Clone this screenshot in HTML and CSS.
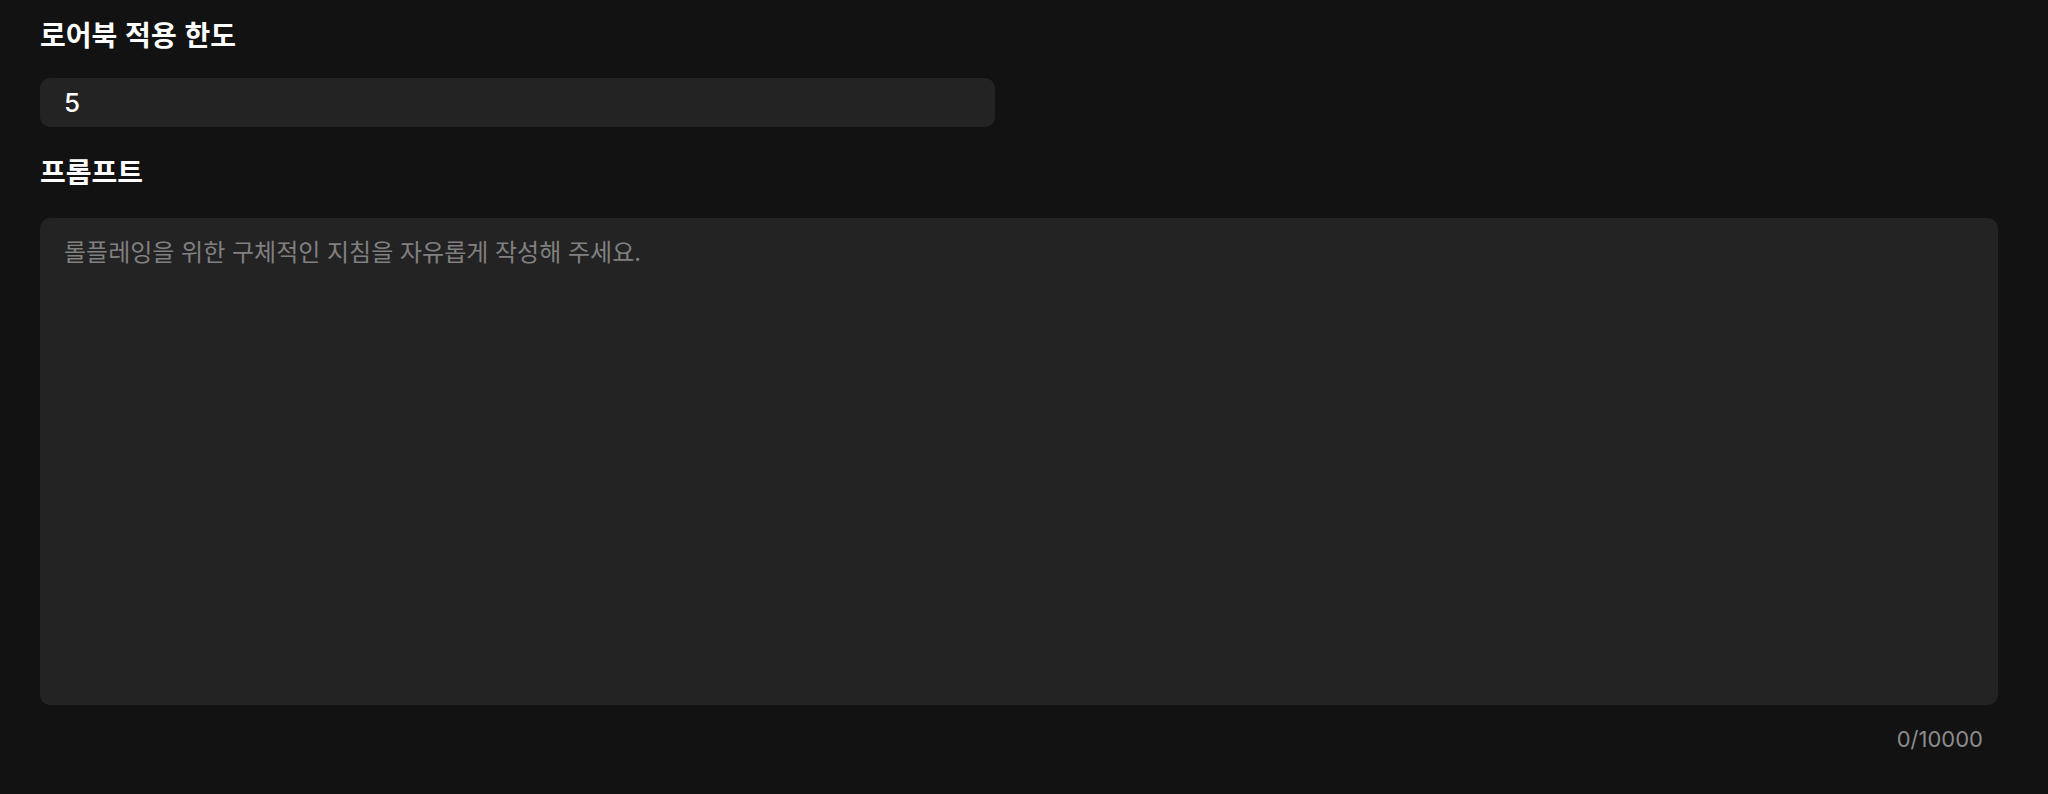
FILE: index.html
```html
<!DOCTYPE html>
<html lang="ko">
<head>
<meta charset="utf-8">
<link rel="stylesheet" href="styles.css">
</head>
<body>
<main class="form">
  <label class="field-label" for="limit">로어북 적용 한도</label>
  <input id="limit" class="text-input" type="text" value="5">
  <label class="field-label field-label--second" for="prompt">프롬프트</label>
  <textarea id="prompt" class="text-area" placeholder="롤플레잉을 위한 구체적인 지침을 자유롭게 작성해 주세요."></textarea>
  <div class="counter">0/10000</div>
</main>
</body>
</html>
```

FILE: styles.css
```css
html, body {
  margin: 0;
  padding: 0;
  background: #121212;
}
body {
  font-family: "Noto Sans CJK KR", "Noto Sans", sans-serif;
  color: #ffffff;
}
.form {
  display: flex;
  flex-direction: column;
  align-items: flex-start;
  padding: 13px 50px 0 40px;
}
.field-label {
  font-size: 28px;
  font-weight: 700;
  line-height: 42px;
  color: #ffffff;
  margin-bottom: 23px;
}
.field-label--second {
  margin-top: 23px;
  margin-bottom: 26px;
}
.text-input {
  box-sizing: border-box;
  width: 955px;
  height: 49px;
  border: none;
  outline: none;
  border-radius: 10px;
  background: #232323;
  color: #ffffff;
  font-family: Inter, "Noto Sans CJK KR", sans-serif;
  font-size: 26px;
  font-weight: 500;
  padding: 0 24px;
}
.text-area {
  box-sizing: border-box;
  width: 100%;
  height: 487px;
  border: none;
  outline: none;
  resize: none;
  border-radius: 10px;
  background: #232323;
  color: #ffffff;
  font-family: "Noto Sans CJK KR", "Noto Sans", sans-serif;
  font-size: 24px;
  line-height: 36px;
  padding: 15px 24px;
}
.text-area::placeholder {
  color: #808080;
}
.counter {
  align-self: stretch;
  text-align: right;
  padding-right: 15px;
  margin-top: 18px;
  font-family: Inter, sans-serif;
  font-size: 22px;
  line-height: 33px;
  color: #8c8c8c;
}
```
